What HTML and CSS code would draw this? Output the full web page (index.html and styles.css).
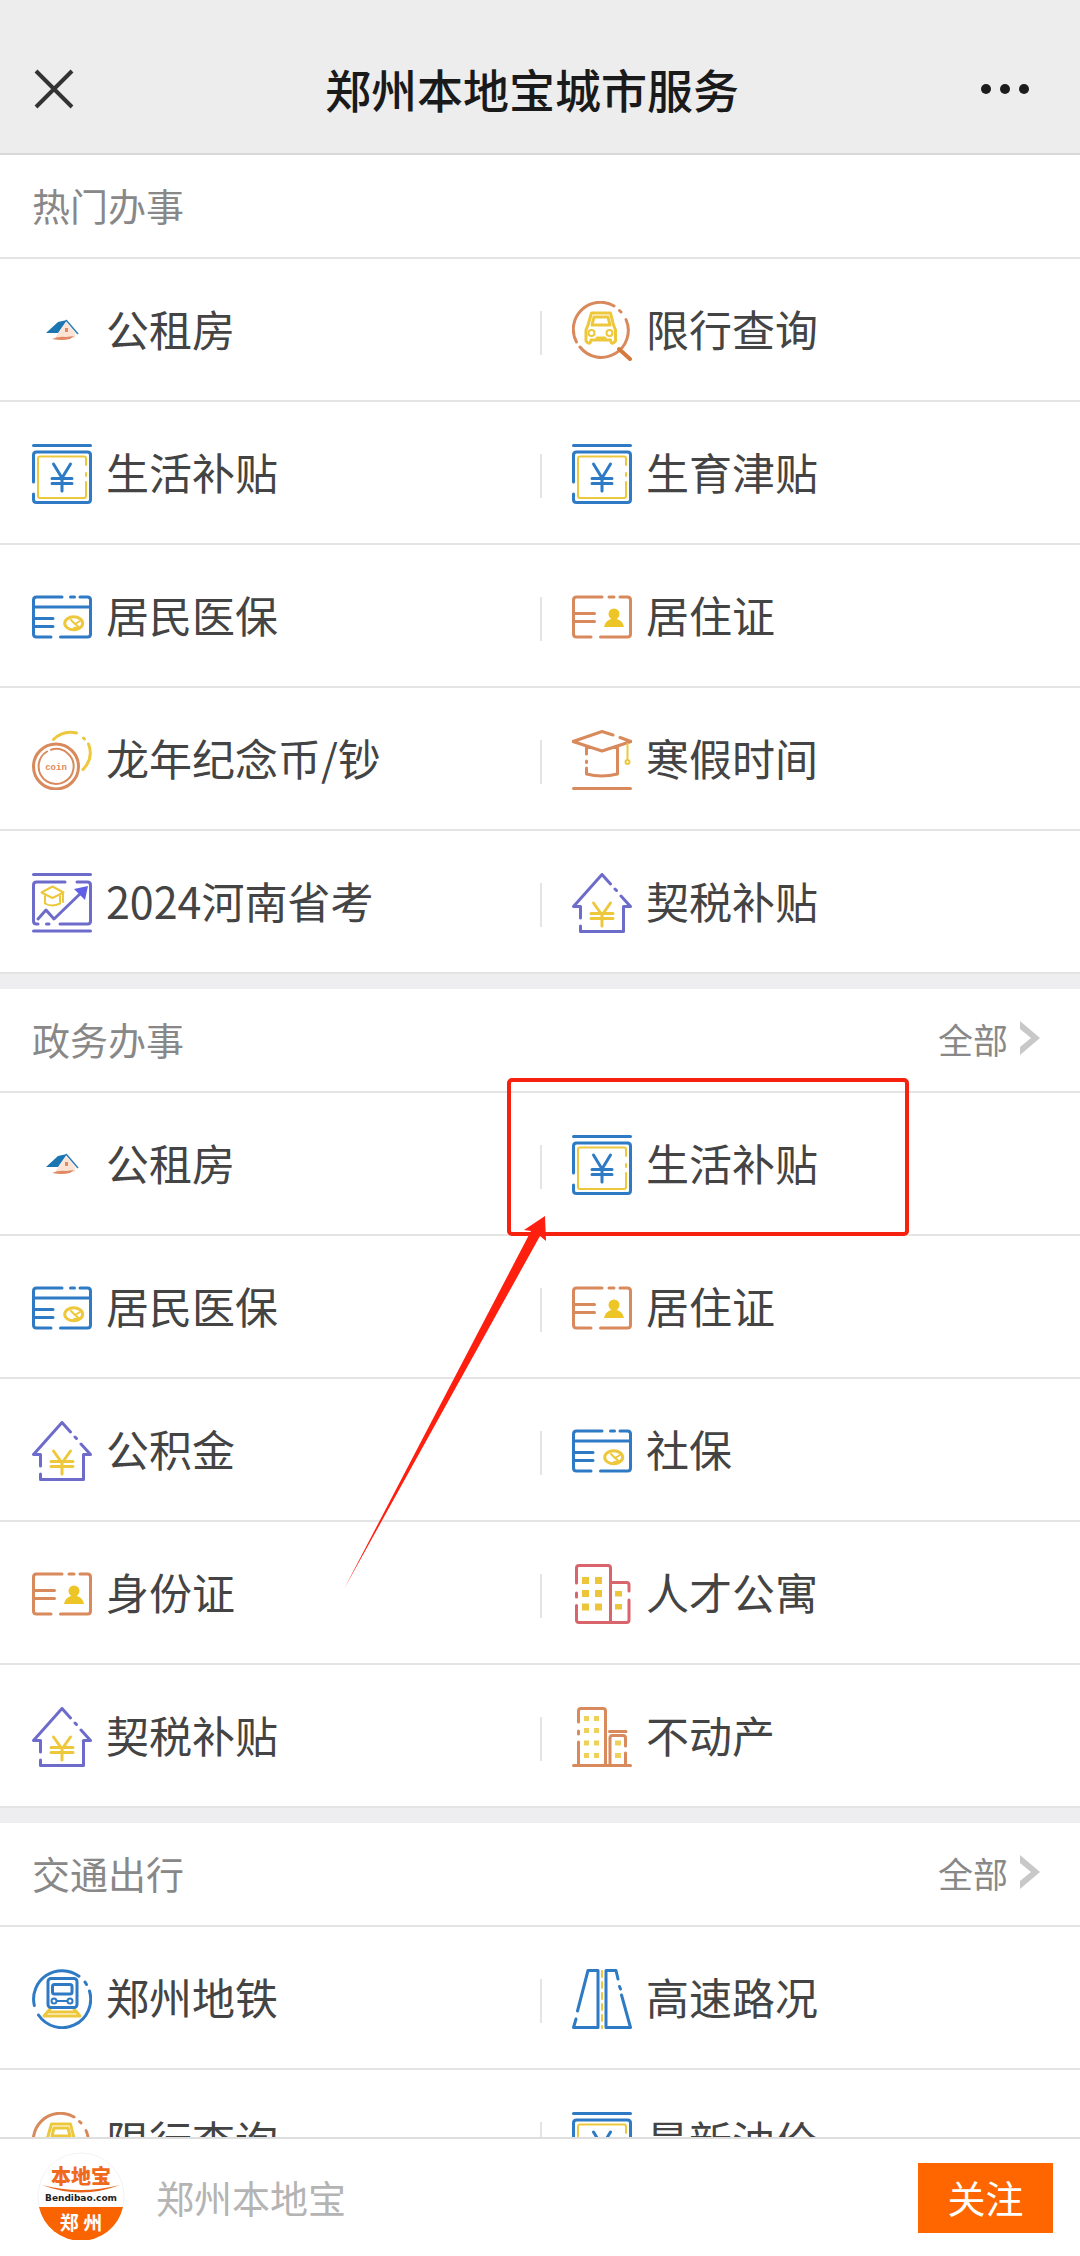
FILE: index.html
```
<!DOCTYPE html>
<html lang="zh-CN">
<head>
  <meta charset="UTF-8">
  <meta name="viewport" content="width=device-width, initial-scale=1">
  <title>郑州本地宝城市服务</title>
  <link rel="stylesheet" href="styles.css">
</head>
<body>
  <!-- icon set -->
  <svg class="sprite" aria-hidden="true">
    <symbol id="i-rent" viewBox="0 0 60 60">
      <path fill="#fbe3d6" d="M34 21l9 11v5H23z"/>
      <path fill="#1b75b0" d="M14 32l12-11 9-2-9 13z"/>
      <path fill="none" stroke="#2f7db0" stroke-width="1.500" d="M34 19l12 14"/>
      <path fill="#e08a63" d="M33 27h3v4h-3zM20 38q7-3 14-2l8-1-4 3q-8 2-18 0z"/>
    </symbol>
    <symbol id="i-money" viewBox="0 0 60 60">
      <path class="blue" d="M1.500 1.500h57M1.500 38V11q0-3 3-3h51q3 0 3 3v44.500q0 3-3 3h-51q-3 0-3-3V50"/>
      <path class="yellow thin" d="M54 21v-6.500q0-2-2-2H8q-2 0-2 2V52q0 2 2 2h44q2 0 2-2V38M54 29v3"/>
      <path class="blue" d="M21.500 20L30 34l8.500-14M30 34v13M20 34.500h20M20 39.500h20"/>
    </symbol>
    <symbol id="i-card" viewBox="0 0 60 60">
      <path class="blue" d="M30 10H4.500q-3 0-3 3v34q0 3 3 3H19M28.500 50h27q3 0 3-3V13q0-3-3-3H48M38.500 10h4M2 20h56M2 31.500h19M2 39.500h19"/>
      <ellipse class="yellow" cx="41.700" cy="36.300" rx="9" ry="6.500"/>
      <path class="yellow thin" d="M39 33l4 4 5-3M43 37l5 4M42 41l7-1"/>
    </symbol>
    <symbol id="i-id" viewBox="0 0 60 60">
      <path class="orange" d="M30 10H4.500q-3 0-3 3v34q0 3 3 3H19M28.500 50h27q3 0 3-3V13q0-3-3-3H48M37 10h5M2 26.500h20.500M2 34.500h20.500"/>
      <circle cx="42" cy="27" r="5.500" fill="#edc526"/>
      <path fill="#edc526" d="M32 40q1-6 7-8h6q6 2 7 8z"/>
    </symbol>
    <symbol id="i-search" viewBox="0 0 60 60">
      <path class="orange" d="M8 46A27 27 0 0 0 54 18.500M42 5A27 27 0 0 0 4.500 41M47.500 9.500l1.500 1.500"/>
      <path d="M47 48l11 10" stroke="#d5793f" stroke-width="4" stroke-linecap="round"/>
      <path class="yellow" d="M19.500 12h19l3 12 2 5v11q-4 5-5-1H19q-1 6-5 1V29l2-5zM20 24l2-8h14l2 8zM25 37h8"/>
      <circle class="yellow thin" cx="19.500" cy="32" r="3"/>
      <circle class="yellow thin" cx="37.500" cy="32" r="3"/>
    </symbol>
    <symbol id="i-coin" viewBox="0 0 60 60">
      <path class="yellow" d="M21.500 9.500Q31 0 44.500 3M51.500 8l1 1M56.500 14Q62 28 51 39.500"/>
      <circle class="orange" cx="24" cy="36.500" r="22.500"/>
      <path class="orange thin" d="M15 21.500A17.500 17.500 0 1 0 19 19.700"/>
      <text x="24" y="40" text-anchor="middle" class="coin-text">coin</text>
    </symbol>
    <symbol id="i-cap" viewBox="0 0 60 60">
      <path class="orange" d="M41 5L30 1.500 1 11.500l29 9.500 29-9.500-11-4M14.500 17v7M14.500 31v1.500M14.500 38v6q15 4 31 0V17M1.500 58.500h57"/>
      <path class="yellow thin" d="M55.500 14v15"/>
      <circle class="yellow thin" cx="55.500" cy="32" r="2"/>
    </symbol>
    <symbol id="i-exam" viewBox="0 0 60 60">
      <path class="purple" d="M1.500 1.500h57M1.500 58h57M33 9H4.500q-3 0-3 3v36q0 3 3 3H6M14.500 51H17M28 51h27.500q3 0 3-3V12q0-3-3-3H45M6 46l8-9 8 9 29-28"/>
      <path fill="#5f60e6" d="M56 13l-14 3 11 11z"/>
      <path class="yellow thin" d="M20.500 13.500l11 6-11 5.500-11-5.500zM13 22.500v8q7 4 15 0v-8M31 20v9"/>
    </symbol>
    <symbol id="i-house" viewBox="0 0 60 60">
      <path class="purple" d="M38.500 11L30 1.500 1.500 33.500h7V45M8.500 53v5.500h43v-25h7L49 23M43 16l1.500 1.500"/>
      <path class="yellow" d="M21.500 30L30 42l8.500-12M30 42v11M19 40.500h22M19 45.500h22"/>
    </symbol>
    <symbol id="i-flat" viewBox="0 0 60 60">
      <path class="red" d="M4.500 19V4q0-2.500 2.500-2.500h29Q38.500 1.500 38.500 4v54.500H7q-2.500 0-2.500-2.500V41.500M4.500 29v4M38.500 18.500h16q2.500 0 2.500 2.500v6M57 36v20q0 2.500-2.500 2.500h-16"/>
      <path fill="#edc53a" d="M10 13h7v7h-7zM23 13h7v7h-7zM10 26h7v7h-7zM23 26h7v7h-7zM10 39.500h7v7h-7zM23 39.500h7v7h-7zM43 27h7v5.500h-7zM43 40h7v5.500h-7z"/>
    </symbol>
    <symbol id="i-estate" viewBox="0 0 60 60">
      <path class="orange" d="M6.500 15V4q0-2.500 2.500-2.500h22q2.500 0 2.500 2.500v54M6.500 24v3M6.500 35v23M37.500 24.500H54M38 58V31q0-2.500 2.500-2.500h10.500q2.500 0 2.500 2.500v8M53.500 46v12M1.500 58.500h57"/>
      <path fill="#eed05a" d="M12 9h5v5h-5zM22 9h5v5h-5zM12 21h5v5h-5zM22 21h5v5h-5zM12 33.500h5v5h-5zM22 33.500h5v5h-5zM12 46h5v5h-5zM22 46h5v5h-5zM43 33.500h6v5h-6zM43 46h6v5h-6z"/>
    </symbol>
    <symbol id="i-metro" viewBox="0 0 60 60">
      <path class="yellow" d="M18 40l-6 7h36l-6-7M16 43h28"/>
      <path class="blue" d="M47 7.200A28.500 28.500 0 0 0 2.300 36.500M6.500 46A28.500 28.500 0 0 0 57.500 22M53 13l1.500 2.500"/>
      <rect class="blue" x="16" y="9.500" width="29" height="29" rx="3"/>
      <rect class="blue" x="20.500" y="15.500" width="19.500" height="9.500" rx="2"/>
      <circle class="blue thin" cx="22" cy="32" r="2.500"/>
      <circle class="blue thin" cx="38" cy="32" r="2.500"/>
      <path class="blue thin" d="M25 32h10"/>
    </symbol>
    <symbol id="i-road" viewBox="0 0 60 60">
      <path class="blue" d="M5.500 42L16 1.500h10v57H1.500L4 50M46 10l-2-8.500H34v57h24.500L49.500 26M47.500 17.500l1 2.500"/>
      <path class="yellow thin" d="M30 2v57" stroke-dasharray="6 5"/>
    </symbol>
  </svg>

  <header class="topbar">
    <button class="icon-btn" aria-label="关闭">
      <svg width="40" height="40" viewBox="0 0 40 40"><path d="M2 2l36 36M38 2L2 38" fill="none" stroke="#333" stroke-width="4"/></svg>
    </button>
    <h1>郑州本地宝城市服务</h1>
    <button class="icon-btn" aria-label="更多">
      <svg width="50" height="12" viewBox="0 0 50 12" fill="#1c1c1c"><circle cx="6" cy="6" r="5"/><circle cx="25" cy="6" r="5"/><circle cx="44" cy="6" r="5"/></svg>
    </button>
  </header>

  <main>
    <section>
      <div class="section-head"><h2>热门办事</h2></div>
      <nav class="grid">
        <a href="#"><svg><use href="#i-rent"/></svg><span>公租房</span></a>
        <a href="#"><svg><use href="#i-search"/></svg><span>限行查询</span></a>
        <a href="#"><svg><use href="#i-money"/></svg><span>生活补贴</span></a>
        <a href="#"><svg><use href="#i-money"/></svg><span>生育津贴</span></a>
        <a href="#"><svg><use href="#i-card"/></svg><span>居民医保</span></a>
        <a href="#"><svg><use href="#i-id"/></svg><span>居住证</span></a>
        <a href="#"><svg><use href="#i-coin"/></svg><span>龙年纪念币/钞</span></a>
        <a href="#"><svg><use href="#i-cap"/></svg><span>寒假时间</span></a>
        <a href="#"><svg><use href="#i-exam"/></svg><span>2024河南省考</span></a>
        <a href="#"><svg><use href="#i-house"/></svg><span>契税补贴</span></a>
      </nav>
    </section>

    <section>
      <div class="section-head">
        <h2>政务办事</h2>
        <a class="more" href="#">全部<svg viewBox="0 0 20 34"><path d="M0 0l20 17L0 34v-8l11-9L0 8z"/></svg></a>
      </div>
      <nav class="grid">
        <a href="#"><svg><use href="#i-rent"/></svg><span>公租房</span></a>
        <a href="#" class="marked">
          <svg><use href="#i-money"/></svg><span>生活补贴</span>
          <svg class="arrow" viewBox="0 0 204 374"><path d="M201 0l-21 14 7 1L0 373 196 20l6 5z"/></svg>
        </a>
        <a href="#"><svg><use href="#i-card"/></svg><span>居民医保</span></a>
        <a href="#"><svg><use href="#i-id"/></svg><span>居住证</span></a>
        <a href="#"><svg><use href="#i-house"/></svg><span>公积金</span></a>
        <a href="#"><svg><use href="#i-card"/></svg><span>社保</span></a>
        <a href="#"><svg><use href="#i-id"/></svg><span>身份证</span></a>
        <a href="#"><svg><use href="#i-flat"/></svg><span>人才公寓</span></a>
        <a href="#"><svg><use href="#i-house"/></svg><span>契税补贴</span></a>
        <a href="#"><svg><use href="#i-estate"/></svg><span>不动产</span></a>
      </nav>
    </section>

    <section>
      <div class="section-head">
        <h2>交通出行</h2>
        <a class="more" href="#">全部<svg viewBox="0 0 20 34"><path d="M0 0l20 17L0 34v-8l11-9L0 8z"/></svg></a>
      </div>
      <nav class="grid">
        <a href="#"><svg><use href="#i-metro"/></svg><span>郑州地铁</span></a>
        <a href="#"><svg><use href="#i-road"/></svg><span>高速路况</span></a>
        <a href="#"><svg><use href="#i-search"/></svg><span>限行查询</span></a>
        <a href="#"><svg><use href="#i-money"/></svg><span>最新油价</span></a>
      </nav>
    </section>
  </main>

  <footer class="follow">
    <svg class="logo" viewBox="0 0 88 88">
      <circle cx="44" cy="44" r="43" fill="#fff" stroke="#f3f3f3"/>
      <path fill="#fa6400" d="M2 55h84a43 43 0 0 1-84 0z"/>
      <path fill="#e8641b" d="M5 33q38 10 78 0-39 15-78 0z"/>
      <text x="44" y="32" text-anchor="middle" class="logo-name">本地宝</text>
      <text x="44" y="49" text-anchor="middle" class="logo-site">Bendibao.com</text>
      <text x="44" y="78" text-anchor="middle" class="logo-city">郑 州</text>
    </svg>
    <span class="account">郑州本地宝</span>
    <button class="follow-btn">关注</button>
  </footer>
</body>
</html>
```
FILE: styles.css
```
:root {
  --line: #e4e4e4;
  --text: #444;
  --muted: #888;
  --accent: #ff6600;
}
*, *::after { box-sizing: border-box; }
body {
  margin: 0;
  height: 100vh;
  display: flex;
  flex-direction: column;
  overflow: hidden;
  font-family: "Noto Sans CJK SC", sans-serif;
  color: var(--text);
  background: #fff;
}
h1, h2 { margin: 0; }
a { color: inherit; text-decoration: none; }
button {
  border: none;
  padding: 0;
  font-family: inherit;
  cursor: pointer;
}
.sprite { display: none; }

/* top bar */
.topbar {
  display: grid;
  grid-template-columns: 1fr auto 1fr;
  align-items: center;
  height: 155px;
  padding: 24px 50px 0 34px;
  background: #ededed;
  border-bottom: 2px solid #d9d9d9;
}
.topbar h1 {
  padding-bottom: 2px;
  font-size: 46px;
  font-weight: 500;
  color: #1a1a1a;
}
.icon-btn {
  display: flex;
  background: none;
}
.icon-btn:last-child { justify-self: end; }

/* sections */
main {
  flex: 1;
  min-height: 0;
  overflow: hidden;
}
section + section { border-top: 15px solid #eeeef0; }
.section-head {
  display: flex;
  align-items: center;
  justify-content: space-between;
  height: 104px;
  padding: 0 40px 4px 32px;
  border-bottom: 2px solid var(--line);
  color: var(--muted);
}
.section-head h2 {
  font-size: 38px;
  font-weight: 400;
}
.more {
  display: flex;
  align-items: center;
  gap: 12px;
  font-size: 35px;
}
.more svg {
  width: 20px;
  height: 34px;
  fill: #c8c8c8;
}
.grid {
  display: grid;
  grid-template-columns: 1fr 1fr;
}
.grid a {
  display: flex;
  align-items: center;
  gap: 14px;
  height: 143px;
  padding: 2px 0 0 32px;
  border-bottom: 2px solid var(--line);
  font-size: 43px;
}
.grid a:nth-child(even) {
  background: linear-gradient(var(--line), var(--line)) no-repeat left 52px / 2px 44px;
}
.grid span { padding-bottom: 6px; }
.grid svg {
  width: 60px;
  height: 60px;
}

/* line icons */
.blue, .yellow, .orange, .purple, .red {
  fill: none;
  stroke-width: 3;
  stroke-linecap: round;
  stroke-linejoin: round;
}
.blue { stroke: #2f7ac4; }
.yellow { stroke: #edc83c; }
.orange { stroke: #d98a5c; }
.purple { stroke: #6e6ccb; }
.red { stroke: #d9646c; }
.thin { stroke-width: 2; }
.coin-text {
  font: bold 9px "Liberation Mono", monospace;
  fill: #e08a5a;
}

/* highlighted entry */
.grid .marked { position: relative; }
.marked::after {
  content: "";
  position: absolute;
  top: -15px;
  left: -33px;
  width: 402px;
  height: 158px;
  border: 4px solid #f7210f;
  border-radius: 5px;
}
.grid .arrow {
  position: absolute;
  top: 123px;
  left: -196px;
  z-index: 1;
  width: 204px;
  height: 374px;
  fill: #ff1f0f;
}

/* follow bar */
.follow {
  display: flex;
  align-items: center;
  height: 119px;
  padding: 0 27px 0 37px;
  border-top: 2px solid #dedede;
  background: #fff;
}
.logo {
  width: 88px;
  height: 88px;
  margin-bottom: 4px;
}
.logo-name {
  font-size: 20px;
  font-weight: 900;
  fill: #f06a1d;
}
.logo-site {
  font: bold 9px "DejaVu Sans", sans-serif;
  fill: #222;
}
.logo-city {
  font-size: 19px;
  font-weight: 700;
  fill: #fff;
}
.account {
  flex: 1;
  margin-left: 31px;
  padding-bottom: 2px;
  font-size: 38px;
  color: #b4b4b4;
}
.follow-btn {
  width: 135px;
  height: 70px;
  padding-bottom: 2px;
  font-size: 38px;
  color: #fff;
  background: var(--accent);
}
```
